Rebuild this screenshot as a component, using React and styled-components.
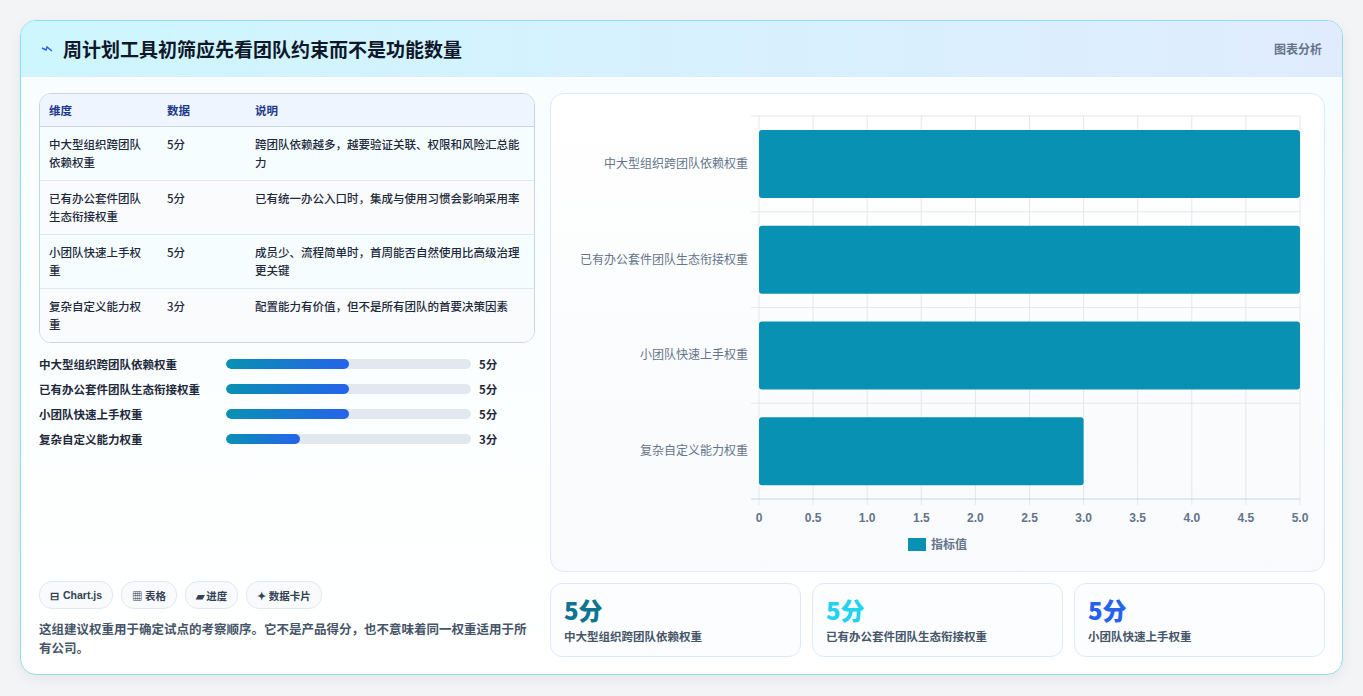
import styled, { createGlobalStyle } from "styled-components"

const Global = createGlobalStyle`
  html, body { margin: 0; background: #f3f4f6; }
  body { font-family: "Noto Sans CJK SC", "Noto Sans", sans-serif; }
`

const Page = styled.div`
  padding: 20px 20px 20px 20px;
  box-sizing: border-box;
  width: 1363px;
  height: 696px;
`

const Card = styled.div`
  border: 1px solid #8fdcea;
  border-radius: 16px;
  background: linear-gradient(180deg, #f7feff 0%, #ffffff 100%);
  overflow: hidden;
  height: 655px;
  box-sizing: border-box;
  box-shadow: 0 4px 14px rgba(0, 0, 0, 0.06);
  display: flex;
  flex-direction: column;
`

const Header = styled.div`
  height: 55px;
  display: flex;
  align-items: center;
  justify-content: space-between;
  padding: 0 20px;
  background: linear-gradient(90deg, #cdf6fd 0%, #e0ecfd 100%);
  border-bottom: 1px solid #dbeafe;
`

const Title = styled.h1`
  margin: 0;
  font-size: 19px;
  font-weight: 700;
  color: #0f172a;
  display: flex;
  align-items: center;
  gap: 10px;
`

const HeadTag = styled.span`
  font-size: 12px;
  font-weight: 700;
  color: #64748b;
`

const Body = styled.div`
  flex: 1;
  display: grid;
  grid-template-columns: 496px 1fr;
  gap: 15px;
  padding: 16px 18px 17px 18px;
  min-height: 0;
`

const Left = styled.div`
  display: flex;
  flex-direction: column;
`

const Table = styled.table`
  width: 100%;
  border-collapse: separate;
  border-spacing: 0;
  border: 1px solid #cbd5e1;
  border-radius: 12px;
  overflow: hidden;
  font-size: 11.5px;
  color: #1e293b;
  th {
    background: #eef5fe;
    color: #1e3a8a;
    font-weight: 700;
    text-align: left;
    height: 32px;
    padding: 0 9px;
    border-bottom: 1px solid #cbd5e1;
  }
  td {
    vertical-align: top;
    padding: 8px 9px 6px;
    line-height: 18px;
    font-weight: 500;
    height: 39px;
  }
  tr:nth-child(odd) td { background: #f5fdff; }
  tr:nth-child(even) td { background: #f9fbfd; }
  tr:not(:last-child) td { border-bottom: 1px solid #e2e8f0; }
`

const Bars = styled.div`
  margin-top: 12px;
  display: flex;
  flex-direction: column;
  gap: 7px;
`

const BarRow = styled.div`
  display: grid;
  grid-template-columns: 179px 245px 1fr;
  gap: 0 8px;
  align-items: center;
  font-size: 11.5px;
  font-weight: 700;
  color: #1e293b;
  height: 18px;
`

const Track = styled.div`
  height: 10px;
  border-radius: 5px;
  background: #e2e8f0;
  overflow: hidden;
`

const Fill = styled.div`
  height: 100%;
  border-radius: 5px;
  background: linear-gradient(90deg, #0891b2, #2563eb);
`

const Chips = styled.div`
  margin-top: auto;
  display: flex;
  gap: 8px;
`

const Chip = styled.span`
  height: 26px;
  padding: 0 10px;
  border: 1px solid #e2e8f0;
  border-radius: 13px;
  background: #f8fafc;
  display: inline-flex;
  align-items: center;
  gap: 4px;
  font-size: 10.5px;
  font-weight: 700;
  color: #334155;
`

const Note = styled.p`
  margin: 10px 0 0;
  font-size: 12.5px;
  line-height: 19px;
  font-weight: 700;
  color: #475569;
`

const Right = styled.div`
  display: flex;
  flex-direction: column;
  gap: 11px;
  min-height: 0;
`

const ChartBox = styled.div`
  flex: 1;
  border: 1px solid #dbeafe;
  border-radius: 14px;
  background: linear-gradient(180deg, #ffffff, #f8fafc);
  min-height: 0;
`

const Stats = styled.div`
  display: grid;
  grid-template-columns: repeat(3, 1fr);
  gap: 11px;
  height: 74px;
`

const Stat = styled.div`
  border: 1px solid #dbeafe;
  border-radius: 12px;
  background: #fbfdff;
  padding: 10px 13px;
`

const StatNum = styled.div`
  font-size: 24px;
  font-weight: 800;
  line-height: 32px;
  color: ${(p) => p.$c};
`

const StatLabel = styled.div`
  font-size: 11.5px;
  font-weight: 700;
  color: #475569;
  margin-top: 2px;
`

const rows = [
  ["中大型组织跨团队依赖权重", 5, "跨团队依赖越多，越要验证关联、权限和风险汇总能力"],
  ["已有办公套件团队生态衔接权重", 5, "已有统一办公入口时，集成与使用习惯会影响采用率"],
  ["小团队快速上手权重", 5, "成员少、流程简单时，首周能否自然使用比高级治理更关键"],
  ["复杂自定义能力权重", 3, "配置能力有价值，但不是所有团队的首要决策因素"],
]

const tableNames = ["中大型组织跨团队依赖权重", "已有办公套件团队生态衔接权重", "小团队快速上手权重", "复杂自定义能力权重"]

function Chart() {
  const x0 = 208, x1 = 749, top = 22, bottom = 405
  const band = (bottom - top) / 4
  const ticks = [0, 0.5, 1, 1.5, 2, 2.5, 3, 3.5, 4, 4.5, 5]
  const sx = (v) => x0 + ((x1 - x0) * v) / 5
  return (
    <svg width="773" height="479" style={{ display: "block" }}>
      {ticks.map((t) => (
        <g key={t}>
          <line x1={sx(t)} x2={sx(t)} y1={top} y2={bottom + 6} stroke="#e5e7eb" />
          <text x={sx(t)} y={428} textAnchor="middle" fontSize="12" fontWeight="700" fill="#64748b" fontFamily="Liberation Sans, sans-serif">
            {t === 0 ? "0" : t.toFixed(1)}
          </text>
        </g>
      ))}
      {[0, 1, 2, 3, 4].map((i) => (
        <line key={i} x1={x0 - 8} x2={x1} y1={top + i * band} y2={top + i * band} stroke={i === 4 ? "#cbd5e1" : "#e5e7eb"} />
      ))}
      {rows.map((r, i) => (
        <g key={r[0]}>
          <rect x={x0} y={top + i * band + 14} width={sx(r[1]) - x0} height={68} rx="3" fill="#0891b2" />
          <text x={x0 - 11} y={top + i * band + band / 2 + 4} textAnchor="end" fontSize="12" fill="#64748b">
            {r[0]}
          </text>
        </g>
      ))}
      <rect x={357} y={444} width={18} height={13} fill="#0891b2" />
      <text x={380} y={455} fontSize="12" fontWeight="700" fill="#64748b">指标值</text>
    </svg>
  )
}

export default function App() {
  return (
    <Page>
      <Global />
      <Card>
        <Header>
          <Title>
            <svg width="12" height="10" viewBox="0 0 12 10">
              <path d="M1 4 L5 6 L6 3 L11 7" stroke="#2563eb" strokeWidth="1.4" fill="none" />
            </svg>
            周计划工具初筛应先看团队约束而不是功能数量
          </Title>
          <HeadTag>图表分析</HeadTag>
        </Header>
        <Body>
          <Left>
            <Table>
              <thead>
                <tr>
                  <th style={{ width: 100 }}>维度</th>
                  <th style={{ width: 70 }}>数据</th>
                  <th>说明</th>
                </tr>
              </thead>
              <tbody>
                {rows.map((r) => (
                  <tr key={r[0]}>
                    <td>{r[0]}</td>
                    <td>{r[1]}分</td>
                    <td>{r[2]}</td>
                  </tr>
                ))}
              </tbody>
            </Table>
            <Bars>
              {tableNames.map((n, i) => (
                <BarRow key={n}>
                  <span>{n}</span>
                  <Track>
                    <Fill style={{ width: `${(rows[i][1] / 10) * 100}%` }} />
                  </Track>
                  <span>{rows[i][1]}分</span>
                </BarRow>
              ))}
            </Bars>
            <Chips>
              <Chip>⊟ <span style={{ fontFamily: "Liberation Sans, sans-serif" }}>Chart.js</span></Chip>
              <Chip>▦ 表格</Chip>
              <Chip>▰ 进度</Chip>
              <Chip>✦ 数据卡片</Chip>
            </Chips>
            <Note>这组建议权重用于确定试点的考察顺序。它不是产品得分，也不意味着同一权重适用于所有公司。</Note>
          </Left>
          <Right>
            <ChartBox>
              <Chart />
            </ChartBox>
            <Stats>
              <Stat>
                <StatNum $c="#0e7490">5分</StatNum>
                <StatLabel>中大型组织跨团队依赖权重</StatLabel>
              </Stat>
              <Stat>
                <StatNum $c="#22d3ee">5分</StatNum>
                <StatLabel>已有办公套件团队生态衔接权重</StatLabel>
              </Stat>
              <Stat>
                <StatNum $c="#2563eb">5分</StatNum>
                <StatLabel>小团队快速上手权重</StatLabel>
              </Stat>
            </Stats>
          </Right>
        </Body>
      </Card>
    </Page>
  )
}
